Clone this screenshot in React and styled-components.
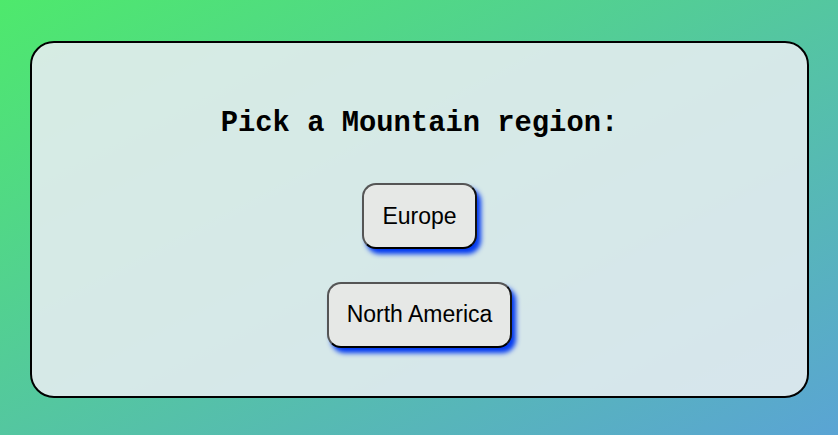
import React from 'react';
import styled, { createGlobalStyle } from 'styled-components';

const GlobalStyle = createGlobalStyle`
  html, body {
    margin: 0;
    padding: 0;
  }
  body {
    min-height: 100vh;
    background: linear-gradient(to bottom right, #4ee96c, #5aa4d4);
    font-family: "Liberation Sans", Arial, sans-serif;
  }
`;

const Page = styled.div`
  min-height: 100vh;
  box-sizing: border-box;
  padding: 41px 29px 37px 30px;
  display: flex;
  align-items: center;
`;

const Card = styled.div`
  flex: 1;
  box-sizing: border-box;
  height: 357px;
  border: 2px solid #000;
  border-radius: 24px;
  background: rgba(228, 236, 240, 0.9);
  padding: 64px 20px 0;
  display: flex;
  flex-direction: column;
  align-items: center;
`;

const Title = styled.h2`
  margin: 0 0 43px;
  font-family: "Liberation Mono", "Courier New", monospace;
  font-size: 28.8px;
  font-weight: bold;
  color: #000;
`;

const Choices = styled.div`
  display: flex;
  flex-direction: column;
  align-items: center;
  gap: 32.5px;
`;

const RegionButton = styled.button`
  font-family: "Liberation Sans", Arial, sans-serif;
  font-size: 23px;
  color: #000;
  padding: 17.6px 18px;
  background: #e6e8e6;
  border: 2px solid;
  border-color: #555 #111 #000 #555;
  border-radius: 14px;
  box-shadow: 4px 5px 5px #0038f0;
  cursor: pointer;
`;

const regions = ['Europe', 'North America'];

export default function App() {
  return (
    <>
      <GlobalStyle />
      <Page>
        <Card>
          <Title>Pick a Mountain region:</Title>
          <Choices>
            {regions.map((r) => (
              <RegionButton key={r}>{r}</RegionButton>
            ))}
          </Choices>
        </Card>
      </Page>
    </>
  );
}
